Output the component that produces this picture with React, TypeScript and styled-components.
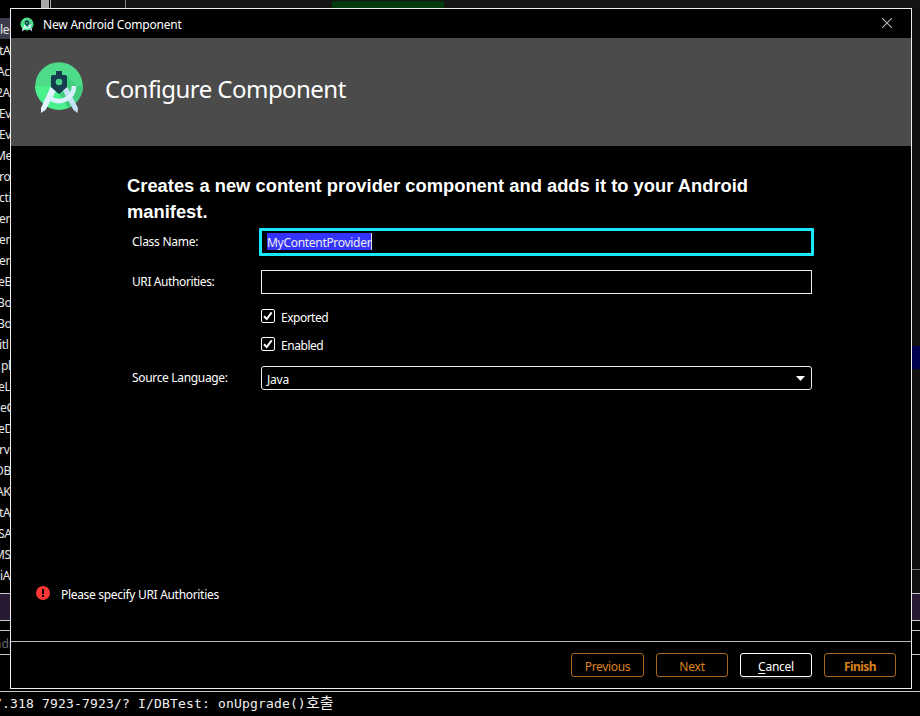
import React from "react";
import styled, { createGlobalStyle } from "styled-components";

const GlobalStyle = createGlobalStyle`
  * { box-sizing: border-box; }
  html, body { margin: 0; background: #000; }
  body { overflow: hidden; font-family: "Noto Sans", "Noto Sans CJK KR", sans-serif; font-size: 12px; color: #fff; }
`;

const Desktop = styled.div`
  position: relative;
  width: 920px;
  height: 716px;
  overflow: hidden;
  background: #000;
  display: flex;
  flex-direction: column;
`;

/* IDE window that lies behind the dialog */
const TopStrip = styled.div`
  display: flex;
  height: 8px;
  flex: none;
  overflow: hidden;
`;
const TopCell = styled.div<{ $w?: number; $bg: string; $line?: string }>`
  ${(p) => (p.$w ? `width: ${p.$w}px; flex: none;` : "flex: 1;")}
  background: ${(p) => p.$bg};
  ${(p) => (p.$line ? `border-left: 1px solid ${p.$line};` : "")}
  height: 8px;
`;
const Highlight = styled(TopCell)`
  border-top: 1px solid #141414;
`;
const IdeBody = styled.div`
  display: flex;
  justify-content: space-between;
  height: 585px;
  flex: none;
`;
const TreeColumn = styled.div`
  width: 40px;
  height: 585px;
  padding-top: 10px;
  overflow: hidden;
`;
const TreeRow = styled.div<{ $x: number; $selected?: boolean }>`
  height: 21px;
  line-height: 22px;
  padding-top: 1px;
  text-indent: ${(p) => p.$x}px;
  white-space: nowrap;
  letter-spacing: -0.3px;
  color: #e6e6e6;
  background: ${(p) => (p.$selected ? "#3c3c4c" : "transparent")};
`;
const EditorColumn = styled.div`
  width: 8px;
  background: #101010;
  display: flex;
  flex-direction: column;
`;
const EditorSpace = styled.div<{ $h: number }>`
  height: ${(p) => p.$h}px;
`;
const CaretLine = styled.div`
  height: 23px;
  background: #000052;
`;
const EditorRule = styled.div`
  height: 1px;
  background: #777;
`;
const ToolHeader = styled.div`
  height: 28px;
  flex: none;
  border-top: 1px solid #c8c8c8;
  border-bottom: 1px solid #c8c8c8;
  background: #281a33;
`;
const ToolFilter = styled.div`
  margin-top: 9px;
  height: 25px;
  flex: none;
  border-top: 1px solid #c8c8c8;
  border-bottom: 1px solid #c8c8c8;
  line-height: 25px;
  color: #666;
  text-indent: -6px;
`;
const Console = styled.div`
  margin-top: 36px;
  flex: 1;
  border-top: 1px solid #c8c8c8;
  padding-top: 2px;
  line-height: 20px;
  font-family: "DejaVu Sans Mono", "Noto Sans CJK KR", monospace;
  font-size: 13px;
  letter-spacing: 0.17px;
  text-indent: -6px;
  white-space: pre;
  color: #f0f0f0;
`;
const Hangul = styled.span`
  font-size: 15px;
  letter-spacing: 0;
  line-height: 1;
`;

/* Dialog window */
const Dialog = styled.section`
  position: absolute;
  left: 10px;
  top: 8px;
  width: 902px;
  height: 681px;
  border: 1px solid #eee;
  background: #000;
  display: flex;
  flex-direction: column;
`;
const TitleBar = styled.header`
  height: 29px;
  flex: none;
  display: flex;
  align-items: center;
  padding: 1px 19px 0 9px;
`;
const Text = styled.span<{ $ls?: number }>`
  letter-spacing: ${(p) => p.$ls ?? 0}px;
  white-space: nowrap;
`;
const TitleText = styled(Text)`
  margin-left: 9px;
  flex: 1;
`;
const CloseIcon = styled.svg`
  margin-top: -2px;
`;
const Banner = styled.div`
  height: 108px;
  flex: none;
  background: #4b4b4b;
  display: flex;
  align-items: flex-start;
  padding: 23px 0 0 22px;
`;
const BannerTitle = styled.h1<{ $ls: number }>`
  margin: 12px 0 0 20px;
  font-size: 24px;
  line-height: 32px;
  font-weight: 400;
  letter-spacing: ${(p) => p.$ls}px;
`;
const Content = styled.main`
  flex: 1;
  display: flex;
  flex-direction: column;
  padding: 27px 97px 0 116px;
`;
const Description = styled.h2`
  margin: 0;
  width: 640px;
  height: 55px;
  font: 700 18.35px/26px "Liberation Sans", Arial, sans-serif;
`;
const Form = styled.div`
  display: grid;
  grid-template-columns: 128px 555px;
  padding-left: 4px;
`;
const Label = styled.label<{ $top: number }>`
  padding: ${(p) => p.$top}px 0 0 1px;
  line-height: 18px;
`;
const FocusedField = styled.div`
  height: 28px;
  border: 3px solid #17eaff;
  border-radius: 1px;
  padding: 2px 5px;
`;
const Selection = styled.div`
  width: 105px;
  height: 17px;
  background: #3434fe;
  border-right: 1px solid #ddd;
  line-height: 19px;
  color: #eee;
`;
const Field = styled.div`
  height: 24px;
  margin: 14px 2px 0;
  border: 1px solid #eee;
`;
const Combo = styled.div`
  height: 24px;
  margin: 2px 2px 0;
  border: 1px solid #eee;
  border-radius: 3px;
  padding: 2px 6px 0 5px;
  display: flex;
  align-items: center;
  justify-content: space-between;
  & > svg { margin-top: -2px; }
`;
const Checks = styled.div`
  grid-column: 2;
  padding: 14px 0 0 2px;
`;
const CheckRow = styled.div`
  display: flex;
  height: 28px;
  gap: 6px;
  line-height: 19px;
  & > svg { margin-top: 1px; }
`;
const Message = styled.div`
  display: flex;
  align-items: center;
  gap: 11px;
  height: 18px;
  margin: auto 0 38px -91px;
  & > svg { margin-top: -2px; }
`;
const Footer = styled.footer`
  height: 47px;
  flex: none;
  border-top: 1px solid #b8b8b8;
  display: flex;
  justify-content: flex-end;
  gap: 12px;
  padding: 11px 15px 0 0;
`;
const Button = styled.button<{ $w?: number; $active?: boolean; $bold?: boolean }>`
  width: ${(p) => p.$w ?? 72}px;
  height: 24px;
  padding: 3px 0 0;
  border: 1px solid ${(p) => (p.$active ? "#fff" : "#a86820")};
  border-radius: 3px;
  background: #000;
  color: ${(p) => (p.$active ? "#fff" : "#db831b")};
  font: ${(p) => (p.$bold ? 700 : 400)} 12px/19px "Noto Sans", sans-serif;
  box-shadow: ${(p) => (p.$active ? "0 2px 0 #1c1c1c" : "none")};
`;
const Mnemonic = styled.span`
  text-decoration: underline;
  text-underline-offset: 2px;
`;

const StudioLogo = ({ width, height }: { width: number; height: number }) => (
  <svg width={width} height={height} viewBox="0 0 52 54">
    <circle cx="26" cy="25" r="23.8" fill="#4edc8b" />
    <path d="M2.2 25A23.8 23.8 0 0 0 49.8 25Z" fill="#49f08c" />
    <path d="M33.5 15 43.5 25H49.8A23.8 23.8 0 0 1 35 47L26 32Z" fill="#40cd7e" />
    <path d="M29.5 29 34.5 26 45 47 44.5 52 40.5 49Z" fill="#c3e2f6" />
    <path d="M17.5 26 23 30 12.5 49 8 52 8 47Z" fill="#e0f3fe" />
    <path d="M41 25A15 15 0 0 1 17 37" fill="none" stroke="#daf0fe" strokeWidth="4.6" />
    <path d="M23 10H29V14H32.5Q34 14 34 16V26L26.8 32.4H25.2L18 26V16Q18 14 19.500 14H23Z" fill="#173c50" />
    <circle cx="26" cy="21" r="3.3" fill="#45d486" />
  </svg>
);

const CheckBox = () => (
  <svg width="14" height="14" viewBox="0 0 14 14">
    <rect x=".5" y=".5" width="13" height="13" rx="1.5" fill="#000" stroke="#fff" />
    <path d="M3 7.2 5.7 10 10.7 3.3" fill="none" stroke="#fff" strokeWidth="2" />
  </svg>
);

const TREE: [string, number][] = [
  ["le", 0], ["tA", -1], ["Act", -3], ["2A", -4], ["Ev", -1], ["Ev", -1], ["Me", -5],
  ["roi", -1], ["cti", -1], ["er", -1], ["er", -1], ["er", -1], ["eB", -2], ["Bo", -3],
  ["Bo", -3], ["itl", -1], ["pl", 1], ["eL", -2], ["eC", 0], ["eD", -2], ["rv", -1],
  ["DB", -5], ["AK", -4], ["tA", -1], ["SA", -2], ["MS", -6], ["iA", 0],
];

export default function App() {
  return (
    <Desktop>
      <GlobalStyle />
      <TopStrip>
        <TopCell $w={41} $bg="#000" />
        <TopCell $w={8} $bg="#aaa" />
        <TopCell $w={1} $bg="#000" />
        <TopCell $w={75} $bg="#111" $line="#aaa">
          <svg width="74" height="8">
            <path d="M30 8a3 3 0 0 1 4-1z" fill="#168b32" />
            <path d="M36 8 39 5 42 8z" fill="#f33b35" />
            <path d="M48 8q4-3 9 0" fill="none" stroke="#aaa" strokeWidth="1.5" />
          </svg>
        </TopCell>
        <TopCell $w={207} $bg="#141414" $line="#888">
          <svg width="206" height="8">
            <path d="M203 7h1v1h-1z" fill="#aaa" />
          </svg>
        </TopCell>
        <Highlight $w={112} $bg="#00390b" />
        <TopCell $bg="#141414">
          <svg width="60" height="8">
            <path d="M26 7h1v1h-1zM44 7h3v1h-3z" fill="#aaa" />
          </svg>
        </TopCell>
      </TopStrip>
      <IdeBody>
        <TreeColumn>
          {TREE.map(([t, x], i) => (
            <TreeRow key={i} $x={x} $selected={i === 0}>{t}</TreeRow>
          ))}
          <svg width="10" height="8"><path d="M2 7q2-2 4 0" fill="none" stroke="#ddd" /></svg>
        </TreeColumn>
        <EditorColumn>
          <EditorSpace $h={338} />
          <CaretLine />
          <EditorSpace $h={200} />
          <EditorRule />
        </EditorColumn>
      </IdeBody>
      <ToolHeader />
      <ToolFilter>ndr</ToolFilter>
      <Console>7.318 7923-7923/? I/DBTest: onUpgrade()<Hangul>호출</Hangul></Console>

      <Dialog>
        <TitleBar>
          <StudioLogo width={14} height={15} />
          <TitleText $ls={-0.2}>New Android Component</TitleText>
          <CloseIcon width="10" height="10" viewBox="0 0 10 10">
            <path d="M0 0 10 10M10 0 0 10" stroke="#b5b5b5" strokeWidth="1.1" />
          </CloseIcon>
        </TitleBar>
        <Banner>
          <StudioLogo width={52} height={54} />
          <BannerTitle $ls={-0.54}>Configure Component</BannerTitle>
        </Banner>
        <Content>
          <Description>
            Creates a new content provider component and adds it to your Android manifest.
          </Description>
          <Form>
            <Label $top={5}><Text $ls={-0.27}>Class Name:</Text></Label>
            <FocusedField>
              <Selection><Text $ls={-0.3}>MyContentProvider</Text></Selection>
            </FocusedField>
            <Label $top={17}><Text $ls={-0.4}>URI Authorities:</Text></Label>
            <Field />
            <Checks>
              <CheckRow><CheckBox /><Text $ls={-0.5}>Exported</Text></CheckRow>
              <CheckRow><CheckBox /><Text $ls={-0.45}>Enabled</Text></CheckRow>
            </Checks>
            <Label $top={5}><Text $ls={-0.33}>Source Language:</Text></Label>
            <Combo>
              <Text $ls={-0.2}>Java</Text>
              <svg width="9" height="5"><path d="M0 0H9L4.5 5Z" fill="#fff" /></svg>
            </Combo>
          </Form>
          <Message>
            <svg width="14" height="14" viewBox="0 0 14 14">
              <circle cx="7" cy="7" r="7" fill="#ff3735" />
              <path d="M6 3h2v5H6zM6 9h2v2H6z" fill="#000" />
            </svg>
            <Text $ls={-0.31}>Please specify URI Authorities</Text>
          </Message>
        </Content>
        <Footer>
          <Button $w={73}><Text $ls={-0.35}>Previous</Text></Button>
          <Button><Text $ls={-0.2}>Next</Text></Button>
          <Button $active><Text $ls={-0.25}><Mnemonic>C</Mnemonic>ancel</Text></Button>
          <Button $bold><Text $ls={-0.6}>Finish</Text></Button>
        </Footer>
      </Dialog>
    </Desktop>
  );
}
